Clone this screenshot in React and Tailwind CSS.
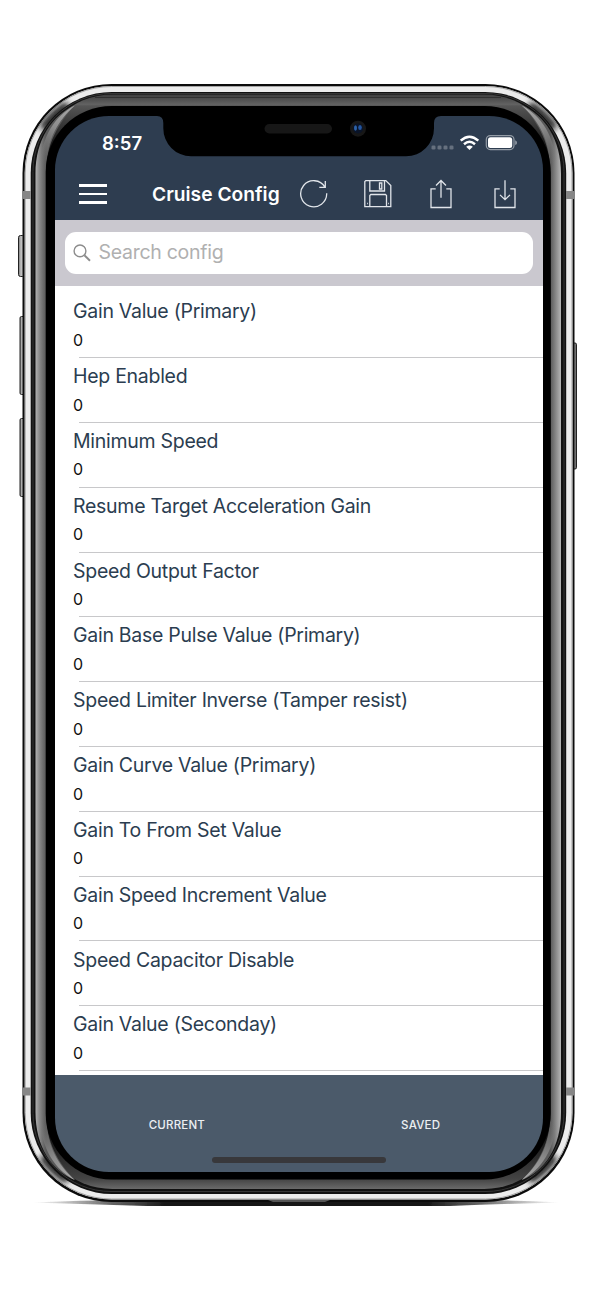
const settings = [
  'Gain Value (Primary)',
  'Hep Enabled',
  'Minimum Speed',
  'Resume Target Acceleration Gain',
  'Speed Output Factor',
  'Gain Base Pulse Value (Primary)',
  'Speed Limiter Inverse (Tamper resist)',
  'Gain Curve Value (Primary)',
  'Gain To From Set Value',
  'Gain Speed Increment Value',
  'Speed Capacitor Disable',
  'Gain Value (Seconday)',
].map((name) => ({ name, value: 0 }));

function PhoneShell() {
  return (
    <svg className="absolute inset-0" width="596" height="1290" viewBox="0 0 596 1290" aria-hidden="true">
      <defs>
        <linearGradient id="key" x1="0" x2="1">
          <stop offset="0" stopColor="#777" />
          <stop offset=".35" stopColor="#b5b5b5" />
          <stop offset="1" stopColor="#e0e0e0" />
        </linearGradient>
        <linearGradient id="keyR" x1="1" x2="0">
          <stop offset="0" stopColor="#444" />
          <stop offset=".35" stopColor="#888" />
          <stop offset="1" stopColor="#ccc" />
        </linearGradient>
        <linearGradient id="bezel" x1="0" x2="0" y1="94" y2="1189" gradientUnits="userSpaceOnUse">
          <stop offset="0" stopColor="#3c3c3c" />
          <stop offset=".0095" stopColor="#626262" />
          <stop offset=".011" stopColor="#555" />
          <stop offset=".05" stopColor="#111" />
          <stop offset=".95" stopColor="#111" />
          <stop offset=".991" stopColor="#444" />
          <stop offset="1" stopColor="#6a6a6a" />
        </linearGradient>
        <linearGradient id="sideL" x1="35.5" x2="46" y1="0" y2="0" gradientUnits="userSpaceOnUse">
          <stop offset="0" stopColor="#b0b0b0" />
          <stop offset=".35" stopColor="#8c8c8c" />
          <stop offset=".75" stopColor="#6b6b6b" />
          <stop offset="1" stopColor="#5a5a5a" />
        </linearGradient>
        <linearGradient id="sideR" x1="561" x2="550.5" y1="0" y2="0" gradientUnits="userSpaceOnUse">
          <stop offset="0" stopColor="#b5b5b5" />
          <stop offset=".35" stopColor="#959595" />
          <stop offset=".75" stopColor="#707070" />
          <stop offset="1" stopColor="#5a5a5a" />
        </linearGradient>
        <linearGradient id="glint" x1="70" y1="106" x2="46" y2="165" gradientUnits="userSpaceOnUse">
          <stop offset="0" stopColor="#a8a8a8" />
          <stop offset=".4" stopColor="#8c8c8c" />
          <stop offset="1" stopColor="#777" stopOpacity="0" />
        </linearGradient>
        <linearGradient id="shadow">
          <stop offset="0" stopColor="#555" stopOpacity="0" />
          <stop offset=".15" stopColor="#333" stopOpacity=".75" />
          <stop offset=".25" stopColor="#181818" />
          <stop offset=".75" stopColor="#181818" />
          <stop offset=".85" stopColor="#333" stopOpacity=".75" />
          <stop offset="1" stopColor="#555" stopOpacity="0" />
        </linearGradient>
        <filter id="soft"><feGaussianBlur stdDeviation="3" /></filter>
        <filter id="feather" x="-5%" y="-50%" width="110%" height="200%"><feGaussianBlur stdDeviation=".6" /></filter>
        <clipPath id="steel"><rect x="24.5" y="86" width="548" height="1113.5" rx="87" /></clipPath>
        <path id="tip" d="M75 105.500C61 112 42 130 40 166H46.500C47 140 58 120 75 105.500Z" fill="url(#glint)" />
      </defs>

      <path d="M32 1202.500Q80 1200 130 1200H466Q516 1200 560 1202.500Q500 1204 450 1206H146Q90 1204 32 1202.500Z" fill="url(#shadow)" filter="url(#feather)" />

      <rect x="18.500" y="235.500" width="6" height="41" rx="2" fill="url(#key)" stroke="#222" />
      <rect x="20" y="316.500" width="5" height="78" rx="1.500" fill="url(#key)" stroke="#222" />
      <rect x="20" y="418.500" width="5" height="78" rx="1.500" fill="url(#key)" stroke="#222" />
      <rect x="572" y="343" width="4.500" height="126" rx="1.500" fill="url(#keyR)" stroke="#222" />

      <rect x="22.500" y="84" width="552" height="1118" rx="89" fill="#0b0b0b" />
      <rect x="24.700" y="86" width="547.800" height="1113.500" rx="87" fill="#ececec" />
      <rect x="25.200" y="86.500" width="546.800" height="1112.500" rx="86.500" fill="none" stroke="#a5a5a5" />
      <g clipPath="url(#steel)">
        <g filter="url(#soft)" fill="none" stroke="#151515" strokeWidth="9">
          <path d="M43 129Q51 116 68 105" />
          <path d="M554 129Q546 116 529 105" />
          <path d="M43 1156Q51 1169 68 1180" />
          <path d="M554 1156Q546 1169 529 1180" />
        </g>
      </g>
      <rect x="30.700" y="92" width="535.500" height="1102" rx="81" fill="#111" />
      <rect x="33" y="93.500" width="531" height="1098" rx="78" fill="none" stroke="#363636" strokeWidth="1" />
      <rect x="35.500" y="94.500" width="525.500" height="1094.500" rx="77" fill="url(#bezel)" />
      <path d="M95 97.500H501" stroke="#303030" strokeWidth="1" />
      <path d="M75 105C52 116 35.500 139 35.500 174V1112C35.500 1147 52 1171 75 1180C58 1163 46 1142 46 1112V174C46 144 58 124 75 105Z" fill="url(#sideL)" />
      <path d="M522 105C545 116 561 139 561 174V1112C561 1147 545 1171 522 1180C539 1163 550.500 1142 550.500 1112V174C550.500 144 539 124 522 105Z" fill="url(#sideR)" />
      <rect x="45.700" y="106" width="505" height="1073.500" rx="66" fill="#000" />
      <use href="#tip" />
      <use href="#tip" transform="translate(596.5 0) scale(-1 1)" />
      <use href="#tip" transform="translate(0 1285.5) scale(1 -1)" />
      <use href="#tip" transform="translate(596.5 1285.5) scale(-1 -1)" />

      <rect x="22.500" y="191" width="8.200" height="8" fill="#868686" />
      <rect x="566" y="191" width="8.500" height="8" fill="#868686" />
      <rect x="22.500" y="1087.500" width="8.200" height="8" fill="#868686" />
      <rect x="566" y="1087.500" width="8.500" height="8" fill="#868686" />
      <path d="M268 1200H330L325 1202H273Z" fill="#555" />
    </svg>
  );
}

function Notch() {
  return (
    <svg className="absolute left-[102px] top-0" width="284" height="41" viewBox="157 116 284 41" aria-hidden="true">
      <path d="M157 115V116Q163.300 116 163.300 123V128A28 28 0 0 0 191 156.300H406A28 28 0 0 0 434 128V123Q434 116 441 116V115Z" fill="#000" />
      <rect x="264.500" y="124" width="67.500" height="9.500" rx="4.750" fill="#171717" />
      <circle cx="358" cy="128.700" r="8" fill="#171717" />
      <circle cx="358" cy="128.500" r="5" fill="#0a1428" />
      <ellipse cx="355.500" cy="128" rx="1.500" ry="2.800" fill="#2d62a8" />
      <ellipse cx="360" cy="127.500" rx="1.800" ry="2.500" fill="#2456a0" />
    </svg>
  );
}

function StatusIcons() {
  return (
    <svg className="absolute left-[375px] top-[16px]" width="90" height="24" viewBox="430 132 90 24" aria-hidden="true">
      <g fill="#66717f">
        <rect x="431.500" y="145.500" width="4" height="4" rx="1.300" />
        <rect x="437.500" y="145.500" width="4" height="4" rx="1.300" />
        <rect x="443.500" y="145.500" width="4" height="4" rx="1.300" />
        <rect x="449.500" y="145.500" width="4" height="4" rx="1.300" />
      </g>
      <g fill="none" stroke="#fff" strokeWidth="2.500">
        <path d="M460.700 140.600Q469.500 132.800 478.300 140.600" />
        <path d="M464 144.200Q469.500 139.400 475 144.200" />
      </g>
      <path d="M466.200 146.800Q469.500 144 472.800 146.800L469.500 150Z" fill="#fff" />
      <rect x="486.300" y="135.600" width="27.700" height="14" rx="4" fill="none" stroke="#939ca6" strokeWidth="1.200" />
      <rect x="488" y="137.300" width="24.200" height="10.700" rx="2.500" fill="#fff" />
      <path d="M515.200 140.300Q517 141 517 142.700T515.200 145Z" fill="#939ca6" />
    </svg>
  );
}

function ToolIcon({ children }) {
  return (
    <svg className="shrink-0" width="30" height="30" viewBox="0 0 30 30" fill="none" stroke="#e1e5ea" strokeWidth="1.300" aria-hidden="true">
      {children}
    </svg>
  );
}

export default function App() {
  return (
    <div className="relative h-[1290px] w-[596px] overflow-hidden bg-white pl-[55px] pt-[116px] font-['Inter',sans-serif]">
      <PhoneShell />
      <main className="relative flex h-[1056px] w-[487.5px] flex-col overflow-hidden rounded-[54px]">
        <header className="flex h-[104px] shrink-0 flex-col bg-[#2e3d50] text-white">
          <div className="h-[52px] pl-[47px] pt-[16px] text-[18.5px] font-semibold leading-[22px]">8:57</div>
          <div className="flex h-[52px] items-center pl-[23.5px]">
            <button className="flex w-[28.5px] flex-col gap-[6px]" aria-label="Menu">
              <span className="h-[2.5px] bg-white" />
              <span className="h-[2.5px] bg-white" />
              <span className="h-[2.5px] bg-white" />
            </button>
            <h1 className="ml-[45px] w-[147px] whitespace-nowrap text-[19.2px] font-semibold tracking-[0.02px]">Cruise Config</h1>
            <div className="flex gap-[33.5px]">
              <ToolIcon>
                <path d="M27.700 14.300A13 13 0 1 1 25.900 8.100M26.300 2V8.300H20.300" />
              </ToolIcon>
              <ToolIcon>
                <path d="M2.800 1.600H22.800L27.800 6.600V27.600H1.800V2.600ZM6.800 1.600V12H21.500V1.600M16.500 4H18.800V10H16.500ZM6.800 27.600V16.500L7.800 15.500H22.500L23.500 16.500V27.600M4 24.500H4.800M25.200 24.500H26" />
              </ToolIcon>
              <ToolIcon>
                <path d="M9.700 9.800H5V28.500H25V9.800H20.300M15 18.700V1.500M10 6.500L15 1.500L20 6.500" />
              </ToolIcon>
              <ToolIcon>
                <path d="M9.700 9.800H5V28.500H25V9.800H20.300M15 1.300V20.700M10 15.900L15 20.700L20 15.900" />
              </ToolIcon>
            </div>
          </div>
        </header>
        <div className="h-[66px] shrink-0 bg-[#cac8cf] px-[9.5px] pt-[12px]">
          <label className="flex h-[42px] items-center rounded-[11px] bg-white pl-[8px] text-[#b0b0b0]">
            <svg width="20" height="20" viewBox="0 0 20 20" fill="none" stroke="#8c8c8c" strokeWidth="1.400" aria-hidden="true">
              <circle cx="7" cy="7.900" r="5.900" />
              <path d="M11.400 12.300L17 17.800" strokeWidth="1.900" />
            </svg>
            <span className="ml-[6px] text-[19.5px] tracking-[-0.28px]">Search config</span>
          </label>
        </div>
        <ul className="min-h-0 flex-1 overflow-hidden bg-white pt-[7.2px]">
          {settings.map((item) => (
            <li key={item.name} className="relative h-[64.83px] pl-[18px]">
              <div className="whitespace-nowrap pt-[5.1px] text-[19.5px] leading-[26px] tracking-[-0.28px] text-[#2b3d50]">{item.name}</div>
              <div className="pt-[4.5px] text-[16px] leading-[22px] text-[#111]">{item.value}</div>
              <div className="absolute bottom-0 left-[24px] right-0 h-px bg-[#c8c8ca]" />
            </li>
          ))}
        </ul>
        <footer className="relative flex h-[97.5px] shrink-0 bg-[#4b5a6a] pt-[41px] text-center text-[11.5px] font-medium leading-[18px] text-[#eceff2]">
          <div className="flex-1 tracking-[0.2px]">CURRENT</div>
          <div className="flex-1 tracking-[0.2px]">SAVED</div>
          <div className="absolute bottom-[9px] left-[156.500px] h-[6px] w-[174px] rounded-full bg-[#38383b]" />
        </footer>
        <Notch />
        <StatusIcons />
      </main>
    </div>
  );
}
